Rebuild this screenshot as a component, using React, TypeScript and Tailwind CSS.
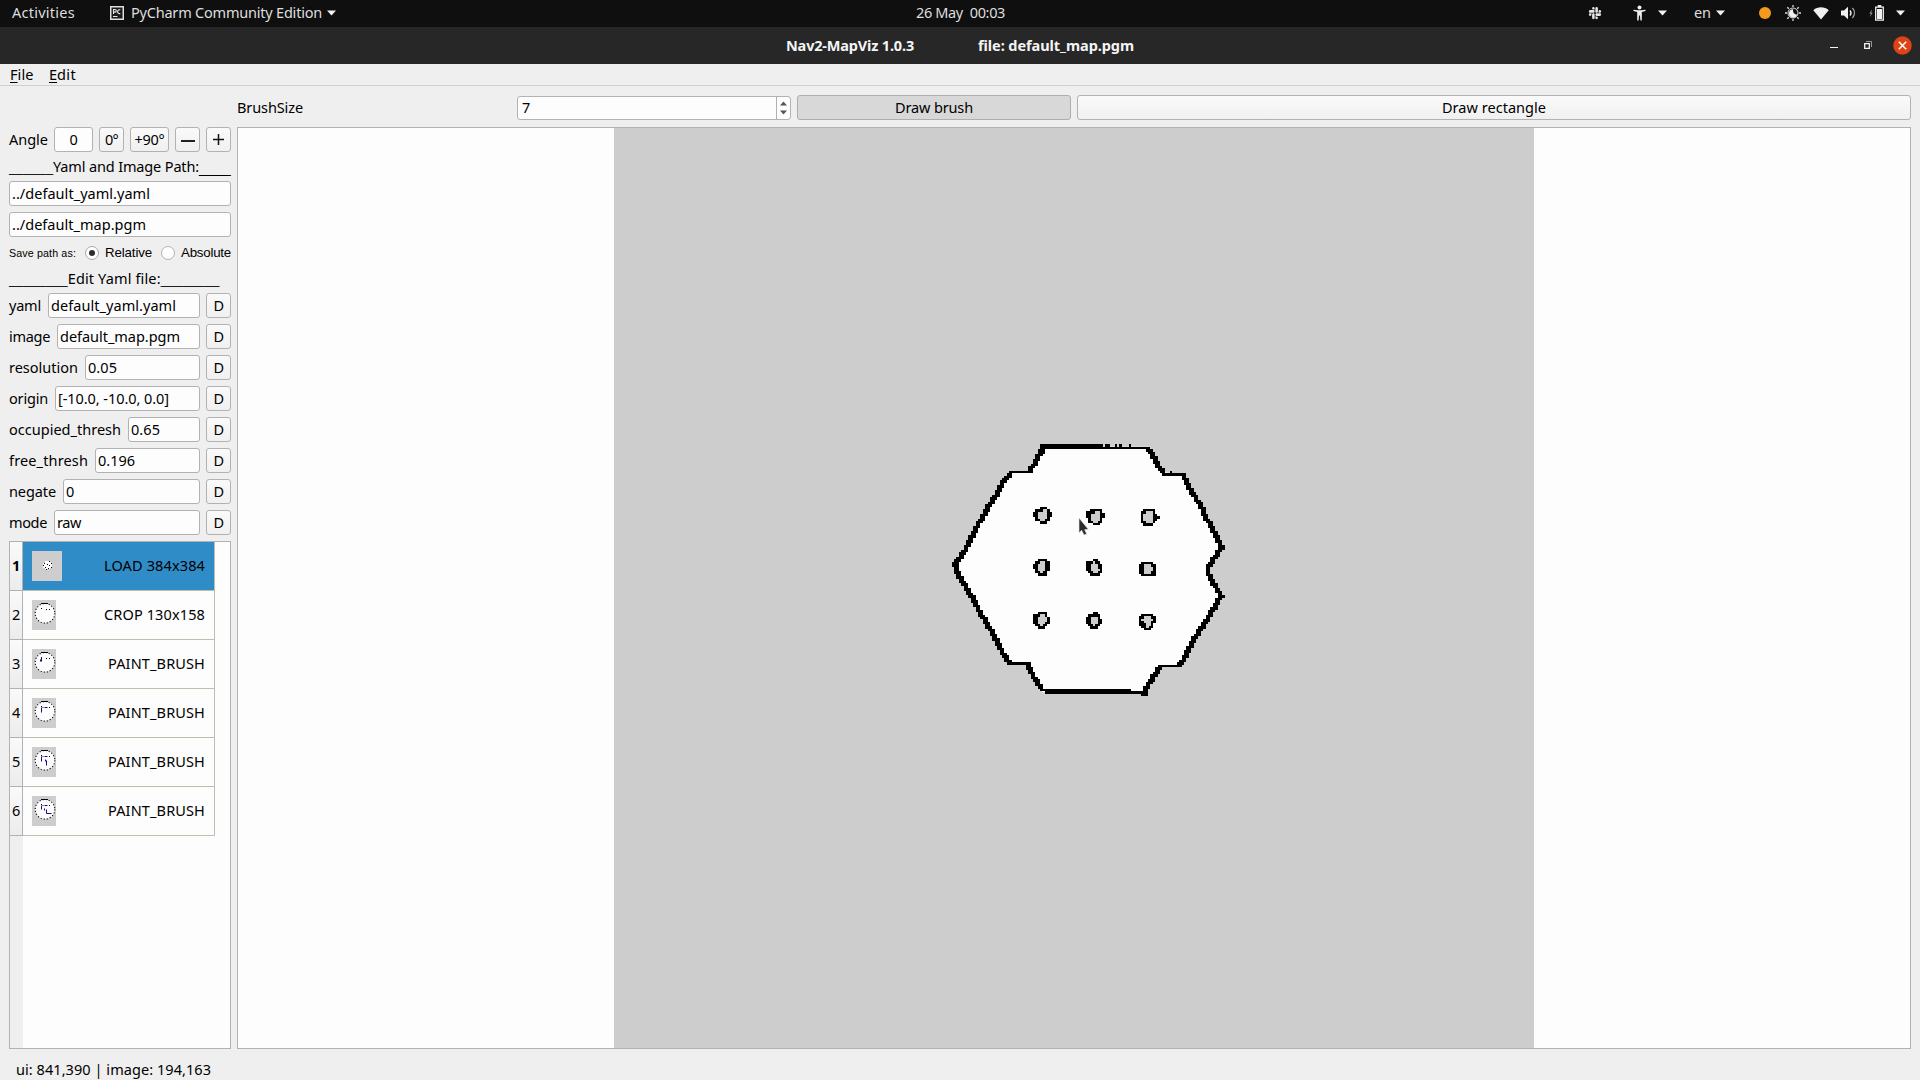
import React, { useLayoutEffect, useRef, useState } from "react";
import { FaSlack } from "react-icons/fa";

/* Text whose letter spacing is computed so that it fills the given width. */
function Fit({ w, children, className = "" }: { w: number; children: string; className?: string }) {
  const ref = useRef<HTMLSpanElement>(null);
  const [spacing, setSpacing] = useState(0);
  useLayoutEffect(() => {
    if (ref.current) {
      const natural = ref.current.getBoundingClientRect().width;
      setSpacing((w - natural) / children.length);
    }
  }, [w, children]);
  return (
    <span ref={ref} className={"inline-block shrink-0 whitespace-pre pb-[2px] " + className} style={{ letterSpacing: spacing }}>
      {children}
    </span>
  );
}

const CELL = 7.188;

const WALLS: number[][][] = [
  [[337, 47], [517, 47]],
  [[337, 54], [658, 54]],
  [[526, 47], [538, 47]],
  [[558, 47], [558, 47]],
  [[573, 47], [573, 47]],
  [[601, 47], [601, 47]],
  [[722, 126], [722, 126]],
  [[658, 58], [668, 75], [680, 98], [697, 124], [705, 131], [757, 133], [765, 148], [787, 190], [805, 215], [828, 262], [850, 305], [866, 335], [876, 355], [862, 370], [848, 392], [832, 413], [836, 435], [850, 460], [866, 485], [873, 500], [862, 515], [825, 577], [805, 605], [790, 632], [765, 682], [747, 709], [690, 711], [680, 728], [660, 757], [643, 785], [643, 795]],
  [[643, 788], [600, 786]],
  [[600, 786], [350, 786]],
  [[600, 780], [332, 780]],
  [[338, 783], [331, 775], [315, 745], [298, 712], [291, 702], [240, 702], [229, 685], [209, 655], [189, 612], [154, 555], [124, 500], [98, 455], [79, 420], [75, 402], [94, 375], [114, 345], [134, 305], [169, 240], [194, 200], [214, 165], [238, 132], [246, 125], [300, 124], [318, 92], [334, 65], [338, 47]],
];

const PILLARS: { x: number; y: number; rows: string[] }[] = [
  { x: 309, y: 231, rows: ["...###..", ".###gg#.", "##gggg##", "##gggg##", ".#gggg#.", ".##gg##.", "...###.."] },
  { x: 467, y: 236, rows: ["..#####.", "####gg#.", "##gggg##", "##gggg##", ".#gggg#.", ".##gg##.", "...###.."] },
  { x: 632, y: 237, rows: [".#####.", "##ggg#.", "#gggg##.", "#gggg###", "#gggg##.", "##ggg#..", ".####..."] },
  { x: 309, y: 387, rows: ["..####.", ".##gg##", "##ggg##", "##ggg##", ".#ggg##", ".##g##.", "..####."] },
  { x: 467, y: 387, rows: ["...##..", "###g##.", "##ggg##", "##ggg##", "##gggg#", ".##gg##", "..####."] },
  { x: 627, y: 395, rows: [".#####.", "##ggg##", "##gggg#", "##gggg#", "##ggg##", ".######"] },
  { x: 309, y: 546, rows: ["..####.", "###gg#.", "##gggg#", "##gggg#", "##ggg##", ".##g##.", "..###.."] },
  { x: 467, y: 546, rows: ["...##..", ".#####.", "##ggg#.", "##ggg##", "##ggg##", ".##g##.", "..###.."] },
  { x: 627, y: 551, rows: [".#####.", "##ggg##", "#ggggg#", "##ggg##", "###gg#.", ".##g##.", "..###.."] },
];

function cellsOf() {
  const black = new Set<string>();
  const snap = (v: number) => Math.round(v / CELL - 0.5);
  for (const line of WALLS) {
    for (let i = 0; i < line.length; i++) {
      const a = line[i];
      const b = line[Math.min(i + 1, line.length - 1)];
      const n = Math.max(1, Math.ceil(Math.max(Math.abs(a[0] - b[0]), Math.abs(a[1] - b[1])) / 1.5));
      for (let k = 0; k <= n; k++) {
        const x = a[0] + ((b[0] - a[0]) * k) / n;
        const y = a[1] + ((b[1] - a[1]) * k) / n;
        black.add(snap(x) + "," + snap(y));
        if (Math.abs(b[1] - a[1]) > 8) black.add(snap(x + 4) + "," + snap(y)).add(snap(x - 4) + "," + snap(y));
      }
    }
  }
  let d = "";
  black.forEach((key) => {
    const [x, y] = key.split(",").map(Number);
    d += `M${(x * CELL).toFixed(1)} ${(y * CELL).toFixed(1)}h7.3v7.3h-7.3z`;
  });
  let dark = "";
  let grey = "";
  for (const p of PILLARS) {
    p.rows.forEach((row, j) =>
      row.split("").forEach((c, i) => {
        const cell = `M${(p.x + i * CELL).toFixed(1)} ${(p.y + j * CELL).toFixed(1)}h7.3v7.3h-7.3z`;
        if (c === "#") dark += cell;
        if (c === "g") grey += cell;
      })
    );
  }
  return { d, dark, grey };
}

const OUTLINE = "M337 50H658L697 126L757 133L828 262L878 355L832 413L873 500L747 711H690L643 787H337L293 703H240L153 555L76 410L168 240L240 125H303Z";

function FloorMap() {
  const { d, dark, grey } = cellsOf();
  return (
    <svg className="absolute left-[316px] top-[302px]" width="310" height="280" viewBox="0 0 930 840">
      <path d={OUTLINE} fill="#fdfdfd" />
      <path d={grey} fill="#cdcdcd" shapeRendering="crispEdges" />
      <path d={d + dark} fill="#000" shapeRendering="crispEdges" />
      <path d="M447 264v44l8-7 7 14 8-3-6-13 11-1z" fill="#2b2b2b" stroke="#e4e4e4" strokeWidth="2" />
    </svg>
  );
}

function Thumb({ kind }: { kind: number }) {
  if (kind === 0)
    return (
      <svg width="30" height="30" viewBox="0 0 30 30" className="bg-[#cdcdcd]" shapeRendering="crispEdges">
        <path d="M13 10h4v1h2v2h1v4h-2v1h-5v-1h-2v-5h2z" fill="#fdfdfd" />
        <path d="M17 10h1v1h-1zM12 12h1v1h-1zM19 12h1v1h-1zM15 13h1v1h-1zM11 14h1v1h-1zM17 14h1v1h-1zM13 16h1v1h-1zM19 16h1v1h-1zM16 17h1v1h-1zM14 18h1v1h-1z" fill="#000" />
      </svg>
    );
  const stroke = ["", "", "M9 8v4M8 10v2", "M9 9v5M10 9h1M12 9h3", "M9 9v5M10 9h1M12 9h3M13 12v2M14 13v5", "M9 9v4M10 9h1M12 9h3M12 12v2M14 13v4h5"][kind];
  return (
    <svg width="24" height="30" viewBox="0 0 24 30" className="bg-[#cdcdcd]">
      <circle cx="13" cy="13.3" r="9.800" fill="#fdfdfd" />
      <circle cx="13" cy="13.3" r="9.800" fill="none" stroke="#000" strokeWidth="1.100" strokeDasharray="1.100 2" />
      <path d="M9 3.500h7" stroke="#000" />
      <path d="M9 8h1v1h-1zM14 9h1v1h-1zM17 9h1v1h-1z" fill="#000" />
      <path d={stroke} stroke="#1a0a86" fill="none" transform="translate(.5 .5)" />
    </svg>
  );
}

const field = "flex h-[25px] items-center rounded-[3px] border border-[#b2b2b2] bg-[#fdfdfd]";
const button = "flex h-[25px] shrink-0 items-center justify-center rounded-[3px] border border-[#b2b2b2] bg-gradient-to-b from-[#fafafa] to-[#f0f0f0]";

const yamlRows: [string, number, string, number, number][] = [
  ["yaml", 32, "default_yaml.yaml", 125, 39],
  ["image", 41, "default_map.pgm", 120, 48],
  ["resolution", 69, "0.05", 29, 76],
  ["origin", 39, "[-10.0, -10.0, 0.0]", 111, 46],
  ["occupied_thresh", 112, "0.65", 29, 119],
  ["free_thresh", 79, "0.196", 37, 86],
  ["negate", 47, "0", 8, 54],
  ["mode", 38, "raw", 24, 45],
];

const history: [string, number][] = [
  ["LOAD 384x384", 101],
  ["CROP 130x158", 101],
  ["PAINT_BRUSH", 97],
  ["PAINT_BRUSH", 97],
  ["PAINT_BRUSH", 97],
  ["PAINT_BRUSH", 97],
];

function Caret() {
  return (
    <svg width="9" height="6" viewBox="0 0 9 6" fill="#f2f2f2">
      <path d="M0 0.5h9L4.500 5.500z" />
    </svg>
  );
}

function TopBar() {
  return (
    <div className="relative flex h-[27px] items-center bg-[#0f0f0f] pb-[1px] text-[#dedede]">
      <Fit w={63} className="ml-3">Activities</Fit>
      <svg className="ml-[35px]" width="14" height="14" viewBox="0 0 14 14">
        <rect width="14" height="14" fill="#dedede" />
        <rect x="1.500" y="1.500" width="11" height="11" fill="#1c1c1c" />
        <path d="M3.500 8V3.500H5a1.200 1.200 0 0 1 0 2.600H3.500M10.300 4a1.900 1.900 0 1 0 0 3.400M3 10.500h4.500" stroke="#e6e6e6" fill="none" strokeWidth="1.100" />
      </svg>
      <Fit w={191} className="ml-[7px]">PyCharm Community Edition</Fit>
      <div className="ml-[5px]"><Caret /></div>
      <div className="absolute left-[916px] top-[2px]"><Fit w={89}>26 May  00:03</Fit></div>
      <div className="ml-auto flex items-center">
        <FaSlack size={14} color="#e4e4e4" />
        <svg className="ml-[31px]" width="13" height="16" viewBox="0 0 13 16" fill="#f0f0f0">
          <circle cx="6.500" cy="2.400" r="2" />
          <path d="M.5 4.800 5 5.300h3l4.500-.5v1.300L8.800 7v8.600H7.400l-.4-5h-1l-.4 5H4.200V7L.5 6.100z" />
        </svg>
        <div className="ml-[12px]"><Caret /></div>
        <div className="ml-[27px]"><Fit w={17}>en</Fit></div>
        <div className="ml-[5px]"><Caret /></div>
        <span className="ml-[34px] size-3 rounded-full bg-[#f39a1c]" />
        <svg className="ml-[14px]" width="16" height="16" viewBox="0 0 16 16" fill="none" stroke="#dcdcdc">
          <path d="M8 0v2M8 14v2M0 8h2M14 8h2M2.300 2.300l1.500 1.500M12.200 12.200l1.500 1.500M2.300 13.700l1.500-1.500M12.200 3.800l1.500-1.500" strokeWidth="1.300" />
          <circle cx="8" cy="8" r="5" strokeWidth="1" />
          <path d="M8.200 4.200a4.200 4.200 0 1 0 4 5.400A4 4 0 0 1 8.200 4.200z" fill="#f0f0f0" stroke="none" />
        </svg>
        <svg className="ml-[12px]" width="16" height="13" viewBox="0 0 16 13" fill="#f0f0f0">
          <path d="M.3 3.200C4.600-.6 11.400-.6 15.700 3.200L8 12.600z" />
        </svg>
        <svg className="ml-[12px]" width="15" height="14" viewBox="0 0 15 14" fill="none" stroke="#e8e8e8">
          <path d="M0 4.500h3L7 .8v12.400L3 9.500H0z" fill="#f0f0f0" stroke="none" />
          <path d="M9 4.500a4 4 0 0 1 0 5" strokeWidth="1.400" />
          <path d="M11.400 2a7 7 0 0 1 0 10" strokeWidth="1.200" stroke="#a5a5a5" />
        </svg>
        <svg className="ml-[13px]" width="15" height="16" viewBox="0 0 15 16" fill="none">
          <path d="M3 4.500.4 8.500h1.400L1 12l2.500-4.200H2.200z" fill="#9a9a9a" />
          <path d="M6.700 2.200h7.600v13H6.700z" stroke="#f0f0f0" strokeWidth="1.300" />
          <path d="M8.700 0h3.600v2H8.700zM8 4h5v10H8z" fill="#f0f0f0" />
        </svg>
        <div className="ml-[12px] mr-[15px]"><Caret /></div>
      </div>
    </div>
  );
}

function TitleBar() {
  return (
    <div className="relative flex h-[37px] items-center bg-[#272727] font-bold text-[#f4f4f4]">
      <Fit w={128} className="ml-[786px]">Nav2-MapViz 1.0.3</Fit>
      <Fit w={156} className="ml-[64px]">file: default_map.pgm</Fit>
      <div className="mb-[1px] ml-auto mr-[8px] flex items-center">
        <svg width="8" height="10" viewBox="0 0 8 10"><path d="M0 7.500h8" stroke="#f4f4f4" /></svg>
        <svg className="ml-[26px]" width="8" height="8" viewBox="0 0 8 8" fill="none">
          <path d="M2 .5h5.500V6" stroke="#999" />
          <path d="M.7 2.700h4.600v4.600H.7z" stroke="#f4f4f4" strokeWidth="1.300" />
        </svg>
        <svg className="ml-[21px]" width="19" height="19" viewBox="0 0 19 19">
          <circle cx="9.500" cy="9.500" r="9.300" fill="#dd4317" />
          <path d="M5.800 5.800l7.400 7.400M13.200 5.800l-7.400 7.400" stroke="#fff" strokeWidth="1.500" />
        </svg>
      </div>
    </div>
  );
}

function Underscores({ n, className = "text-[13.200px]" }: { n: number; className?: string }) {
  return <span className={"shrink-0 pt-[2px] font-['Liberation_Sans',sans-serif] " + className}>{"_".repeat(n)}</span>;
}

function Sidebar() {
  return (
    <div className="flex w-[222px] shrink-0 flex-col pt-[41px]">
      <div className="flex h-[25px] items-center">
        <Fit w={39}>Angle</Fit>
        <div className={field + " ml-[6px] w-[39px] justify-center"}><Fit w={8}>0</Fit></div>
        <div className={button + " ml-[6px] w-[25px]"}><Fit w={13}>0°</Fit></div>
        <div className={button + " ml-[6px] w-[39px]"}><Fit w={30}>+90°</Fit></div>
        <div className={button + " ml-[6px] w-[25px]"}><span className="mt-[2px] h-[2px] w-[14px] bg-[#222]" /></div>
        <div className={button + " ml-[6px] w-[25px]"}>
          <svg width="11" height="11" viewBox="0 0 11 11"><path d="M0 5.500h11M5.500 0v11" stroke="#111" strokeWidth="1.500" /></svg>
        </div>
      </div>
      <div className="mt-[5px] flex h-[20px] items-center">
        <Underscores n={6} /><Fit w={146}>Yaml and Image Path:</Fit><Underscores n={4} className="text-[14.300px]" />
      </div>
      <div className={field + " mt-[4px] pl-[2px]"}><Fit w={138}>../default_yaml.yaml</Fit></div>
      <div className={field + " mt-[6px] pl-[2px]"}><Fit w={134}>../default_map.pgm</Fit></div>
      <div className="mt-[6px] flex h-[20px] items-center font-['Liberation_Sans',sans-serif] text-[13.300px]">
        <Fit w={67} className="pt-[2px] text-[10.700px]">Save path as:</Fit>
        <span className="ml-[9px] flex size-[14px] items-center justify-center rounded-full border border-[#a8a8a8] bg-white">
          <span className="size-[6px] rounded-full bg-[#2c2c2c]" />
        </span>
        <Fit w={47} className="ml-[6px] pt-[2px]">Relative</Fit>
        <span className="ml-[9px] size-[14px] rounded-full border border-[#b2b2b2] bg-white" />
        <Fit w={50} className="ml-[6px] pt-[2px]">Absolute</Fit>
      </div>
      <div className="mt-[6px] flex h-[20px] items-center">
        <Underscores n={8} /><Fit w={93}>Edit Yaml file:</Fit><Underscores n={8} />
      </div>
      <div className="mt-[4px] flex flex-col gap-[6px]">
        {yamlRows.map(([label, lw, value, vw, left]) => (
          <div key={label} className="flex h-[25px] items-center">
            <div className="flex shrink-0" style={{ width: left }}><Fit w={lw}>{label}</Fit></div>
            <div className={field + " mr-[6px] flex-1 pl-[2px]"}><Fit w={vw}>{value}</Fit></div>
            <div className={button + " w-[25px]"}><Fit w={10}>D</Fit></div>
          </div>
        ))}
      </div>
      <div className="mt-[6px] flex h-[508px] border border-[#b2b2b2] bg-[#fdfdfd]">
        <div className="w-[13px] shrink-0 bg-[#efefef]">
          {history.map((_, i) => (
            <div key={i} className={"flex h-[49px] items-center justify-center border-b border-r border-[#b2b2b2] bg-gradient-to-b from-[#fafafa] to-[#ececec] " + (i === 0 ? "font-bold" : "")}>
              <Fit w={8}>{String(i + 1)}</Fit>
            </div>
          ))}
        </div>
        <div className="w-[192px]">
          {history.map(([label, w], i) => (
            <div key={i} className={"flex h-[49px] items-center justify-between border-b border-r border-[#bebeae] pl-[9px] pr-[9px] " + (i === 0 ? "bg-[#308cc6]" : "")}>
              <Thumb kind={i} />
              <Fit w={w}>{label}</Fit>
            </div>
          ))}
        </div>
      </div>
    </div>
  );
}

function Workspace() {
  return (
    <div className="flex w-[1674px] flex-col pt-[9px]">
      <div className="flex h-[25px] items-center">
        <div className="flex w-[280px]"><Fit w={66}>BrushSize</Fit></div>
        <div className="mt-px flex h-[24px] w-[274px] rounded-[3px] border border-[#b2b2b2] bg-[#fdfdfd]">
          <div className="flex flex-1 items-center pl-[4px]"><Fit w={8}>7</Fit></div>
          <div className="flex w-[14px] items-center justify-center border-l border-[#b2b2b2]">
            <svg width="7" height="14" viewBox="0 0 7 14" fill="#555"><path d="M0 4.500h7L3.500.5zM0 9.500h7l-3.500 4z" /></svg>
          </div>
        </div>
        <div className="ml-[6px] flex h-[25px] w-[274px] items-center justify-center rounded-[3px] border border-[#aeaeae] bg-[#d8d8d8]">
          <Fit w={78}>Draw brush</Fit>
        </div>
        <div className={button + " ml-[6px] flex-1"}><Fit w={104}>Draw rectangle</Fit></div>
      </div>
      <div className="mt-[7px] flex h-[922px] justify-center border border-[#b2b2b2] bg-[#fdfdfd]">
        <div className="relative w-[920px] bg-[#cdcdcd]"><FloorMap /></div>
      </div>
    </div>
  );
}

export default function App() {
  return (
    <div className="flex h-[1080px] w-[1920px] flex-col overflow-hidden bg-[#efefef] font-['Noto_Sans',sans-serif] text-[14.500px] leading-[20px] text-black">
      <TopBar />
      <TitleBar />
      <div className="flex h-[22px] items-center border-b border-[#cfcfcf] pl-[10px]">
        <div className="flex w-[39px]"><span className="pb-[2px] underline underline-offset-2">F</span><Fit w={16}>ile</Fit></div>
        <div className="flex"><span className="pb-[2px] underline underline-offset-2">E</span><Fit w={19}>dit</Fit></div>
      </div>
      <div className="flex h-[963px] gap-[6px] pl-[9px]">
        <Sidebar />
        <Workspace />
      </div>
      <div className="flex h-[31px] items-center pl-[16px] pt-[11px]"><Fit w={195}>ui: 841,390 | image: 194,163</Fit></div>
    </div>
  );
}
